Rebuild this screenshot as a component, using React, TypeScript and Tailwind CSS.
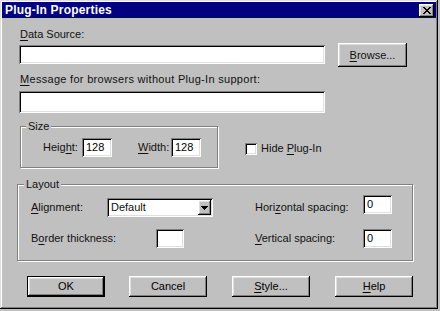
import React from "react";

const raised =
  "shadow-[inset_-1px_-1px_0_#000,inset_1px_1px_0_#fff,inset_-2px_-2px_0_#808080,inset_2px_2px_0_#dfdfdf]";
const sunken =
  "shadow-[inset_1px_1px_0_#808080,inset_-1px_-1px_0_#fff,inset_2px_2px_0_#000,inset_-2px_-2px_0_#dfdfdf]";
const etched = "border border-[#808080] shadow-[inset_1px_1px_0_#fff,1px_1px_0_#fff]";

function U({ children }: { children: React.ReactNode }) {
  return <span className="underline underline-offset-[2px]">{children}</span>;
}

function Field({ w, h, value }: { w: string; h: string; value?: string }) {
  return (
    <div className={`${w} ${h} ${sunken} flex items-center bg-white pl-[4px] text-black`}>
      {value}
    </div>
  );
}

function Button({
  children,
  isDefault,
  className = "",
}: {
  children: React.ReactNode;
  isDefault?: boolean;
  className?: string;
}) {
  return (
    <button
      className={`flex h-[21px] w-[78px] items-center justify-center bg-[#c0c0c0] text-black ${
        isDefault ? "border border-black" : ""
      } ${className}`}
    >
      <span className={`flex h-full w-full items-center justify-center ${raised}`}>{children}</span>
    </button>
  );
}

function GroupLabel({ children, className = "" }: { children: React.ReactNode; className?: string }) {
  return (
    <div className={`-mt-[7px] h-[13px] w-fit bg-[#c0c0c0] px-[2px] leading-[13px] ${className}`}>
      {children}
    </div>
  );
}

export default function App() {
  return (
    <div className="h-[311px] w-[440px] bg-[#c0c0c0] font-['Liberation_Sans',Arial,sans-serif] text-[11px] leading-[13px] text-[#111]">
      <div className="flex h-[309px] w-[438px] flex-col bg-[#c0c0c0] shadow-[inset_-1px_-1px_0_#000,inset_1px_1px_0_#dfdfdf,inset_-2px_-2px_0_#808080,inset_2px_2px_0_#fff]">
        {/* title bar */}
        <div className="mx-[2px] mt-[2px] flex h-[16px] items-center justify-between bg-[#000080] pl-[3px] pr-[2px]">
          <span className="text-[12px] font-bold tracking-[0.2px] text-white">Plug-In Properties</span>
          <div className={`flex h-[13px] w-[15px] items-center justify-center bg-[#c0c0c0] ${raised}`}>
            <svg width="8" height="7" viewBox="0 0 8 7" shapeRendering="crispEdges">
              <path
                d="M0 0h2v1h1v1h2v-1h1v-1h2v1h-1v1h-1v1h-1v1h1v1h1v1h1v1h-2v-1h-1v-1h-2v1h-1v1h-2v-1h1v-1h1v-1h1v-1h-1v-1h-1v-1h-1z"
                fill="#000"
              />
            </svg>
          </div>
        </div>

        <div className="flex flex-col pl-[17px]">
          <div className="ml-[3px] mt-[10px]">
            <U>D</U>ata Source:
          </div>
          <div className="ml-[2px] mt-[2px] flex items-start">
            <div className="mt-[2px]">
              <Field w="w-[306px]" h="h-[19px]" />
            </div>
            <button className={`ml-[13px] flex h-[24px] w-[69px] items-center justify-center bg-[#c0c0c0] ${raised}`}>
              <span>
                <U>B</U>rowse...
              </span>
            </button>
          </div>

          <div className="ml-[3px] mt-[6px] tracking-[0.3px]">
            <U>M</U>essage for browsers without Plug-In support:
          </div>
          <div className="ml-[2px] mt-[5px]">
            <Field w="w-[306px]" h="h-[22px]" />
          </div>

          <div className="mt-[13px] flex items-start">
            <div className={`ml-[3px] h-[42px] w-[198px] ${etched}`}>
              <GroupLabel className="ml-[5px]">Size</GroupLabel>
              <div className="mt-[5px] flex items-center">
                <span className="ml-[22px] w-[39px]">
                  Heig<U>h</U>t:
                </span>
                <Field w="w-[30px]" h="h-[19px]" value="128" />
                <span className="ml-[26px] w-[33px]">
                  <U>W</U>idth:
                </span>
                <Field w="w-[30px]" h="h-[19px]" value="128" />
              </div>
            </div>
            <div className="ml-[27px] mt-[16px] flex items-center">
              <div className={`h-[12px] w-[12px] bg-white ${sunken}`} />
              <span className="ml-[4px]">
                Hide <U>P</U>lug-In
              </span>
            </div>
          </div>

          <div className={`mt-[16px] h-[77px] w-[396px] ${etched}`}>
            <GroupLabel className="ml-[6px]">Layout</GroupLabel>
            <div className="mt-[4px] flex items-start">
              <span className="ml-[13px] mt-[6px] w-[76px]">
                <U>A</U>lignment:
              </span>
              <div className={`mt-[3px] flex h-[19px] w-[106px] items-center justify-between bg-white pl-[4px] pr-[2px] ${sunken}`}>
                <span>Default</span>
                <div className={`flex h-[15px] w-[13px] items-center justify-center bg-[#c0c0c0] ${raised}`}>
                  <svg width="7" height="4" viewBox="0 0 7 4" shapeRendering="crispEdges">
                    <path d="M0 0h7v1h-1v1h-1v1h-1v1h-1v-1h-1v-1h-1v-1h-1z" fill="#000" />
                  </svg>
                </div>
              </div>
              <span className="ml-[42px] mt-[6px] w-[108px]">
                Hori<U>z</U>ontal spacing:
              </span>
              <Field w="w-[29px]" h="h-[19px]" value="0" />
            </div>
            <div className="mt-[12px] flex items-center">
              <span className="ml-[13px] w-[125px]">
                B<U>o</U>rder thickness:
              </span>
              <Field w="w-[28px]" h="h-[19px]" />
              <span className="ml-[71px] w-[108px]">
                <U>V</U>ertical spacing:
              </span>
              <Field w="w-[29px]" h="h-[19px]" value="0" />
            </div>
          </div>

          <div className="ml-[10px] mt-[15px] flex">
            <Button isDefault>OK</Button>
            <Button className="ml-[24px]">Cancel</Button>
            <Button className="ml-[25px]">
              <span>
                <U>S</U>tyle...
              </span>
            </Button>
            <Button className="ml-[25px]">
              <span>
                <U>H</U>elp
              </span>
            </Button>
          </div>
        </div>
      </div>
    </div>
  );
}
